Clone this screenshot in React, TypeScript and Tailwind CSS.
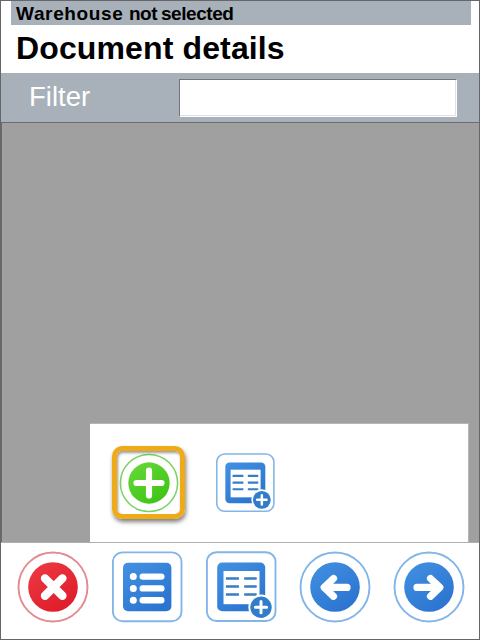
import type { ReactNode } from "react";

type IconProps = { size?: number };

function Frame({ size = 72, id, from, to, children }: IconProps & { id: string; from: string; to: string; children: ReactNode }) {
  return (
    <svg width={size} height={size} viewBox="0 0 72 72" fill="none" className="block shrink-0">
      <defs>
        <linearGradient id={id} x1="0" y1="0" x2="0.7" y2="1">
          <stop offset="0" stopColor={from} />
          <stop offset="1" stopColor={to} />
        </linearGradient>
      </defs>
      {children}
    </svg>
  );
}

function CloseIcon() {
  return (
    <Frame id="red" from="#ed3b43" to="#df1c2b">
      <circle cx="36" cy="36" r="34.5" stroke="#e48a90" strokeWidth="1.9" />
      <circle cx="36" cy="36" r="24.8" fill="url(#red)" />
      <path d="M28 27.4 45.4 44.8M45.4 27.4 28 44.8" stroke="#fff" strokeWidth="8.4" strokeLinecap="round" />
    </Frame>
  );
}

function ListIcon() {
  return (
    <Frame id="list" from="#4291e2" to="#2b74d0">
      <rect x="0.9" y="1.4" width="68.6" height="68.8" rx="9.5" stroke="#83b5e9" strokeWidth="1.9" />
      <rect x="11" y="11.8" width="48.4" height="48.4" rx="5" fill="url(#list)" />
      {[25.6, 37.4, 49.2].map((y) => (
        <g key={y} fill="#fff">
          <circle cx="21.3" cy={y} r="3.5" />
          <rect x="27.5" y={y - 3.2} width="25" height="6.4" rx="3.2" />
        </g>
      ))}
    </Frame>
  );
}

function TableIcon({ size, id }: IconProps & { id: string }) {
  return (
    <Frame size={size} id={id} from="#4291e2" to="#2b74d0">
      <rect x="0.9" y="1.2" width="68.6" height="68.8" rx="9.5" stroke="#83b5e9" strokeWidth="1.9" />
      <rect x="11.2" y="11.5" width="48" height="48.7" rx="5" fill={`url(#${id})`} />
      <rect x="17.5" y="20" width="36" height="33.2" fill="#fff" />
      <path d="M19.9 27.5h13M38.2 27.5h12.5M19.9 35.5h13M38.2 35.5h12.5M19.9 43.5h13M38.2 43.5h12.5" stroke="#397dc4" strokeWidth="2.6" />
      <circle cx="55" cy="56.2" r="12.6" fill="#fff" />
      <circle cx="55" cy="56.2" r="10.7" fill="#327dcb" />
      <path d="M55 50.6v11.2M49.4 56.2h11.2" stroke="#fff" strokeWidth="3" strokeLinecap="round" />
    </Frame>
  );
}

function ArrowIcon({ id, right = false }: { id: string; right?: boolean }) {
  return (
    <Frame id={id} from="#4291e2" to="#2b74d0">
      <circle cx="36" cy="36" r="34.5" stroke="#83b5e9" strokeWidth="1.9" />
      <circle cx="36" cy="36" r="24.8" fill={`url(#${id})`} />
      <path
        d={right ? "M24 36.4H46.6M37.5 27.5 46.8 36.4 37.5 45.3" : "M48 36.4H25.4M34.5 27.5 25.2 36.4 34.5 45.3"}
        stroke="#fff"
        strokeWidth="7.2"
        strokeLinecap="round"
        strokeLinejoin="round"
      />
    </Frame>
  );
}

function AddIcon() {
  return (
    <Frame size={60} id="green" from="#69d93a" to="#3fc416">
      <circle cx="36" cy="36" r="34.3" stroke="#79d360" strokeWidth="1.8" />
      <circle cx="36" cy="36" r="24.8" fill="url(#green)" />
      <path d="M36 21v30M21 36h30" stroke="#fff" strokeWidth="7.4" strokeLinecap="round" />
    </Frame>
  );
}

export default function App() {
  return (
    <div className="flex h-[640px] w-[480px] flex-col overflow-hidden border border-[#67676a] bg-white font-['Liberation_Sans',Arial,sans-serif]">
      <header className="h-[72px] shrink-0">
        <div className="ml-[10px] mr-[8px] flex h-[24px] bg-[#a8b1b9] pl-[5px] text-[19px] font-bold leading-[26px] text-black">
          <span className="w-[113px] tracking-[0.65px]">Warehouse</span>
          <span className="w-[32px] tracking-[-0.5px]">not</span>
          <span className="tracking-[-0.45px]">selected</span>
        </div>
        <h1 className="pl-[15px] pt-[3px] text-[32px] font-bold leading-[40px] tracking-[0.13px] text-black">Document details</h1>
      </header>
      <div className="flex h-[49px] shrink-0 bg-[#a8b1b9] pt-[6px]">
        <label htmlFor="filter" className="w-[178px] pl-[28px] text-[27.5px] leading-[36px] text-white">Filter</label>
        <input
          id="filter"
          className="h-[38px] w-[278px] border border-b-white border-l-[#747477] border-r-white border-t-[#747477] bg-white shadow-[inset_-1px_-1px_0_#dce2e5] outline-none"
        />
      </div>
      <main className="flex h-[420px] shrink-0 items-end border-l border-t border-[#6c6c6c] bg-[#a0a0a0] pl-[88px]">
        <div className="relative flex h-[119px] w-[379px] gap-[37px] border-r border-t border-[#b5b5b5] bg-white pl-[29px] pt-[29px]">
          <AddIcon />
          <TableIcon size={60} id="tableSmall" />
          <div className="absolute left-[22px] top-[22px] h-[73px] w-[73px] rounded-[10px] border-[5px] border-[#efaa18] shadow-[1px_3px_4px_rgba(0,0,0,0.5),inset_1px_2px_3px_rgba(0,0,0,0.4)]" />
        </div>
      </main>
      <nav className="flex grow border-t border-[#b0b0b0] bg-white pl-[16px] pt-[8px]">
        <div className="w-[95px]"><CloseIcon /></div>
        <div className="w-[94px]"><ListIcon /></div>
        <div className="w-[93px]"><TableIcon id="tableLarge" /></div>
        <div className="w-[94px]"><ArrowIcon id="left" /></div>
        <ArrowIcon id="right" right />
      </nav>
    </div>
  );
}
